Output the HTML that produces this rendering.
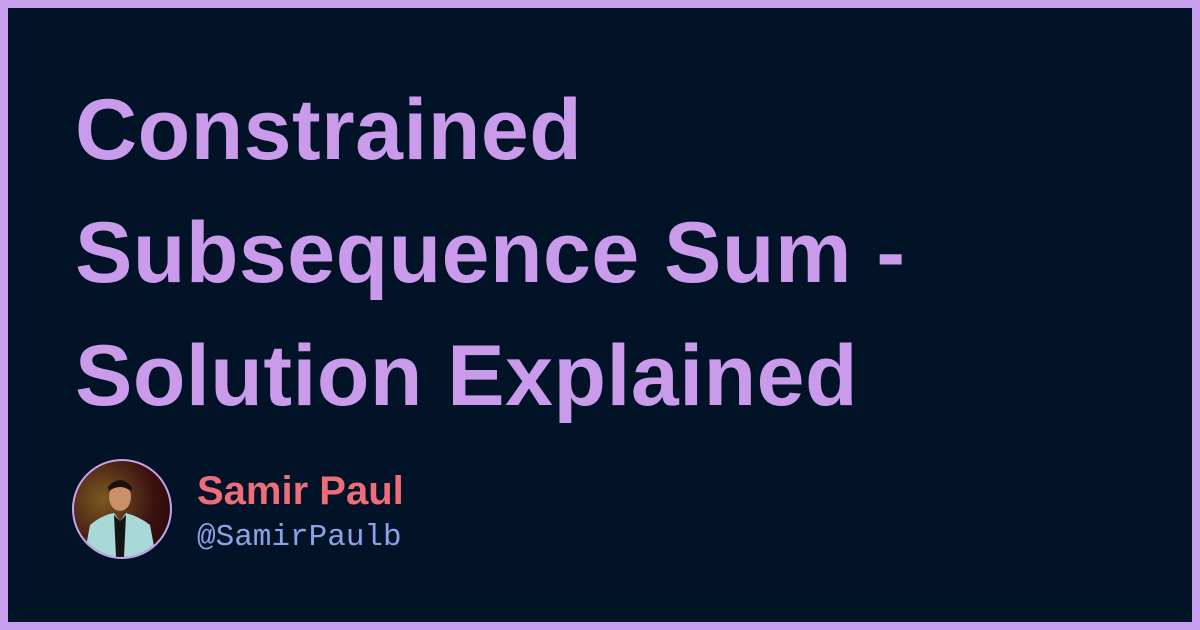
<!DOCTYPE html>
<html><head><style>
html,body{margin:0;padding:0}
body{width:1200px;height:630px;box-sizing:border-box;background:#021327;border:8px solid #c9a0ee;position:relative;overflow:hidden;font-family:"Liberation Sans",sans-serif}
.t{position:absolute;left:67px;top:61px;color:#c99bea;font-weight:bold;font-size:86px;line-height:123px;letter-spacing:0.5px;margin:0}
.av{position:absolute;left:64px;top:451px;width:96px;height:96px;border-radius:50%;border:2px solid #c9a0ee;overflow:hidden;background:radial-gradient(circle at 30% 40%,#7a5a20,#3a1010 60%,#200808)}
.n{position:absolute;left:189px;top:461px;font-size:40px;font-weight:bold;color:#ee6d78}
.h{position:absolute;left:189px;top:512px;font-family:"Liberation Mono",monospace;font-size:31px;color:#8aa3e6}
</style></head><body>
<div class="t">Constrained<br>Subsequence Sum -<br>Solution Explained</div>
<div class="av"><svg width="96" height="96" viewBox="0 0 96 96">
<ellipse cx="46" cy="36" rx="11" ry="14" fill="#c9906a"/>
<path d="M34 26 Q46 12 58 26 L57 30 Q46 22 35 30Z" fill="#1a1010"/>
<path d="M10 96 L16 64 Q28 54 40 52 L46 60 L52 52 Q66 56 76 64 L82 96Z" fill="#a8d8d8"/>
<path d="M40 54 L46 60 L52 54 L50 96 L42 96Z" fill="#151515"/>
</svg></div>
<div class="n">Samir Paul</div>
<div class="h">@SamirPaulb</div>
</body></html>
